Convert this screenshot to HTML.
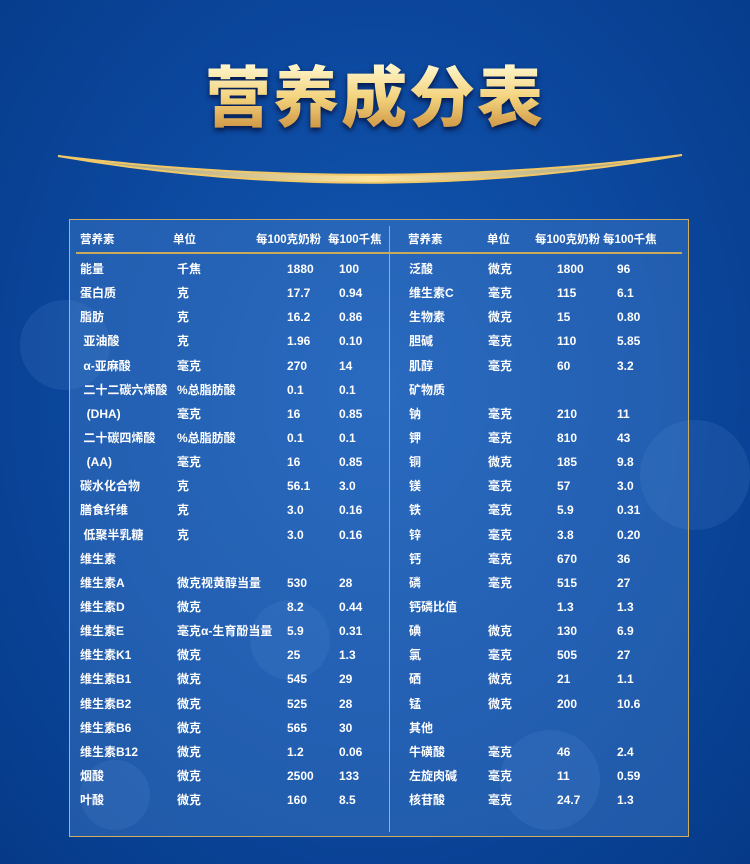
<!DOCTYPE html><html><head><meta charset="utf-8"><style>
body{margin:0;width:750px;height:864px;overflow:hidden;background:radial-gradient(ellipse at 50% 45%,#1558b2 0%,#0b479d 55%,#063a88 100%);font-family:"Liberation Sans","Noto Sans CJK SC",sans-serif;position:relative}
.b{position:absolute;border-radius:50%;background:rgba(120,170,240,.12)}
h1{position:absolute;left:0;width:750px;top:54px;margin:0;text-align:center;font-size:66px;font-weight:900;letter-spacing:2px;line-height:88px;background:linear-gradient(#fff8d0 10%,#f3d27c 50%,#c98e3c 90%);-webkit-background-clip:text;color:transparent;filter:drop-shadow(0 3px 3px rgba(0,0,30,.7))}
.box{position:absolute;left:69px;top:219px;width:620px;height:618px;border:1.5px solid #d1ad5c;background:rgba(80,140,215,.35);box-sizing:border-box}
.t{position:absolute;color:#fff;font-size:12px;font-weight:bold;white-space:nowrap;line-height:14px}
.h{font-size:11.5px}
</style></head><body>
<div class="b" style="left:20px;top:300px;width:90px;height:90px"></div>
<div class="b" style="left:640px;top:420px;width:110px;height:110px"></div>
<div class="b" style="left:250px;top:600px;width:80px;height:80px"></div>
<div class="b" style="left:500px;top:730px;width:100px;height:100px"></div>
<div class="b" style="left:80px;top:760px;width:70px;height:70px"></div>
<h1>营养成分表</h1>
<svg style="position:absolute;left:0;top:0" width="750" height="220"><defs><linearGradient id="g" x1="0" x2="1"><stop offset="0" stop-color="#f4d27a" stop-opacity=".6"/><stop offset=".5" stop-color="#ffe39a"/><stop offset="1" stop-color="#f4d27a" stop-opacity=".6"/></linearGradient></defs><path d="M58 156 Q370 210 682 155 Q370 194 58 156Z" fill="url(#g)" stroke="#f0c868" stroke-width="2"/></svg>
<div class="box"></div>
<div style="position:absolute;left:76px;top:252px;width:606px;height:2px;background:#c9a95a"></div>
<div style="position:absolute;left:389px;top:226px;width:1px;height:606px;background:#c9a95a"></div>
<div id="c"></div>
<script>
var L=[["能量","千焦","1880","100"],["蛋白质","克","17.7","0.94"],["脂肪","克","16.2","0.86"],[" 亚油酸","克","1.96","0.10"],[" α-亚麻酸","毫克","270","14"],[" 二十二碳六烯酸","%总脂肪酸","0.1","0.1"],["  (DHA)","毫克","16","0.85"],[" 二十碳四烯酸","%总脂肪酸","0.1","0.1"],["  (AA)","毫克","16","0.85"],["碳水化合物","克","56.1","3.0"],["膳食纤维","克","3.0","0.16"],[" 低聚半乳糖","克","3.0","0.16"],["维生素","","",""],["维生素A","微克视黄醇当量","530","28"],["维生素D","微克","8.2","0.44"],["维生素E","毫克α-生育酚当量","5.9","0.31"],["维生素K1","微克","25","1.3"],["维生素B1","微克","545","29"],["维生素B2","微克","525","28"],["维生素B6","微克","565","30"],["维生素B12","微克","1.2","0.06"],["烟酸","微克","2500","133"],["叶酸","微克","160","8.5"]];
var R=[["泛酸","微克","1800","96"],["维生素C","毫克","115","6.1"],["生物素","微克","15","0.80"],["胆碱","毫克","110","5.85"],["肌醇","毫克","60","3.2"],["矿物质","","",""],["钠","毫克","210","11"],["钾","毫克","810","43"],["铜","微克","185","9.8"],["镁","毫克","57","3.0"],["铁","毫克","5.9","0.31"],["锌","毫克","3.8","0.20"],["钙","毫克","670","36"],["磷","毫克","515","27"],["钙磷比值","","1.3","1.3"],["碘","微克","130","6.9"],["氯","毫克","505","27"],["硒","微克","21","1.1"],["锰","微克","200","10.6"],["其他","","",""],["牛磺酸","毫克","46","2.4"],["左旋肉碱","毫克","11","0.59"],["核苷酸","毫克","24.7","1.3"]];
var h="";function t(x,y,s,c){h+='<div class="t '+(c||"")+'" style="left:'+x+'px;top:'+y+'px">'+s.replace(/ /g,"&nbsp;")+'</div>';}
[["营养素",80],["单位",173],["每100克奶粉",256],["每100千焦",328],["营养素",408],["单位",487],["每100克奶粉",535],["每100千焦",603]].forEach(function(a){t(a[1],233,a[0],"h")});
for(var i=0;i<23;i++){var y=262+i*24.14;var a=L[i];t(80,y,a[0]);t(177,y,a[1]);t(287,y,a[2]);t(339,y,a[3]);a=R[i];t(409,y,a[0]);t(488,y,a[1]);t(557,y,a[2]);t(617,y,a[3]);}
document.getElementById("c").innerHTML=h;
</script>
</body></html>
